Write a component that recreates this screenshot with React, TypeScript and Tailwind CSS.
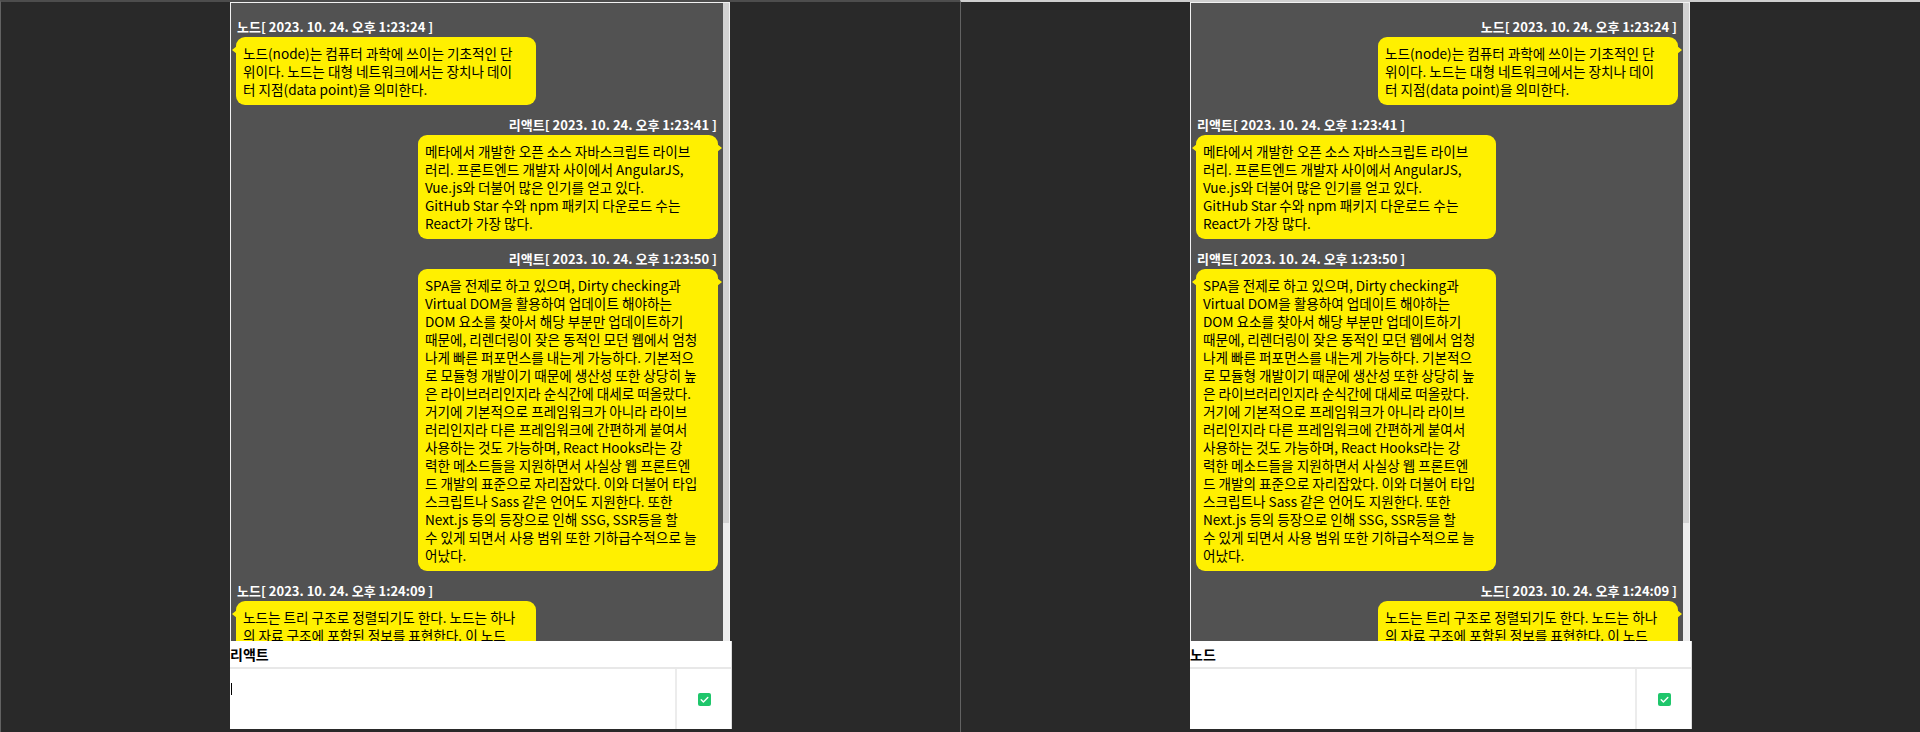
type Message = {
  sender: string;
  time: string;
  lines: string[];
};

const messages: Message[] = [
  {
    sender: '노드',
    time: '2023. 10. 24. 오후 1:23:24',
    lines: [
      '노드(node)는 컴퓨터 과학에 쓰이는 기초적인 단',
      '위이다. 노드는 대형 네트워크에서는 장치나 데이',
      '터 지점(data point)을 의미한다.',
    ],
  },
  {
    sender: '리액트',
    time: '2023. 10. 24. 오후 1:23:41',
    lines: [
      '메타에서 개발한 오픈 소스 자바스크립트 라이브',
      '러리. 프론트엔드 개발자 사이에서 AngularJS,',
      'Vue.js와 더불어 많은 인기를 얻고 있다.',
      'GitHub Star 수와 npm 패키지 다운로드 수는',
      'React가 가장 많다.',
    ],
  },
  {
    sender: '리액트',
    time: '2023. 10. 24. 오후 1:23:50',
    lines: [
      'SPA을 전제로 하고 있으며, Dirty checking과',
      'Virtual DOM을 활용하여 업데이트 해야하는',
      'DOM 요소를 찾아서 해당 부분만 업데이트하기',
      '때문에, 리렌더링이 잦은 동적인 모던 웹에서 엄청',
      '나게 빠른 퍼포먼스를 내는게 가능하다. 기본적으',
      '로 모듈형 개발이기 때문에 생산성 또한 상당히 높',
      '은 라이브러리인지라 순식간에 대세로 떠올랐다.',
      '거기에 기본적으로 프레임워크가 아니라 라이브',
      '러리인지라 다른 프레임워크에 간편하게 붙여서',
      '사용하는 것도 가능하며, React Hooks라는 강',
      '력한 메소드들을 지원하면서 사실상 웹 프론트엔',
      '드 개발의 표준으로 자리잡았다. 이와 더불어 타입',
      '스크립트나 Sass 같은 언어도 지원한다. 또한',
      'Next.js 등의 등장으로 인해 SSG, SSR등을 할',
      '수 있게 되면서 사용 범위 또한 기하급수적으로 늘',
      '어났다.',
    ],
  },
  {
    sender: '노드',
    time: '2023. 10. 24. 오후 1:24:09',
    lines: [
      '노드는 트리 구조로 정렬되기도 한다. 노드는 하나',
      '의 자료 구조에 포함된 정보를 표현한다. 이 노드',
      '는 값(value)을 가지며, 다른 노드와 연결된다.',
    ],
  },
];

const CheckIcon = () => (
  <svg width="13" height="13" viewBox="0 0 13 13">
    <rect width="13" height="13" rx="2" fill="#1fc66b" />
    <path
      d="M3.2 6.8 L5.4 8.9 L9.8 4.4"
      fill="none"
      stroke="#fff"
      strokeWidth="1.4"
      strokeLinecap="round"
      strokeLinejoin="round"
    />
  </svg>
);

const Bubble = ({ message, mine }: { message: Message; mine: boolean }) => {
  return (
    <div className={`mb-[10px] flex flex-col ${mine ? 'items-end' : 'items-start'}`}>
      <div className="h-[20px] px-[1px] text-[13px] leading-[20px] font-bold text-white">
        {message.sender}[ {message.time} ]
      </div>
      <div className="relative w-[300px] rounded-[9px] bg-[#fff000] px-[7px] py-[7px] text-[13.6px] leading-[18px] text-black">
        {mine ? (
          <span className="absolute top-[9px] -right-[4px] h-0 w-0 border-y-[4px] border-l-[5px] border-y-transparent border-l-[#fff000]" />
        ) : (
          <span className="absolute top-[9px] -left-[4px] h-0 w-0 border-y-[4px] border-r-[5px] border-y-transparent border-r-[#fff000]" />
        )}
        {message.lines.map((line, i) => (
          <div key={i} className="whitespace-nowrap">
            {line}
          </div>
        ))}
      </div>
    </div>
  );
};

const ChatPanel = ({ me, focused, topColor }: { me: string; focused: boolean; topColor: string }) => {
  return (
    <div className={`h-full w-[960px] border-t-2 border-l border-l-[#626262] pl-[229px] ${topColor}`}>
      <div className="flex h-[639px] w-[500px] border-x border-t border-[#f2f2f2]">
        <div className="flex-1 overflow-hidden bg-[#525252] px-[5px] pt-[14px]">
          {messages.map((m, i) => (
            <Bubble key={i} message={m} mine={m.sender === me} />
          ))}
        </div>
        <div className="flex w-[6px] flex-col bg-[#ededed]">
          <div className="h-[520px] bg-[#d2d2d2]" />
        </div>
      </div>
      <div className="w-[502px] border-r border-[#dcdcdc] bg-white">
        <div className="flex h-[26px] items-center text-[14px] font-bold text-black">{me}</div>
        <div className="h-[2px] bg-[#e8e8e8]" />
        <div className="flex h-[60px]">
          <div className="flex-1 border-r-2 border-[#ececec] pt-[14px]">
            {focused && <div className="ml-[1px] h-[12px] w-[1px] bg-black" />}
          </div>
          <div className="flex w-[54px] items-center justify-center">
            <CheckIcon />
          </div>
        </div>
      </div>
    </div>
  );
};

export default function App() {
  return (
    <div className="flex h-[732px] w-[1920px] bg-[#292929] font-['Noto_Sans_CJK_KR',sans-serif]">
      <ChatPanel me="리액트" focused topColor="border-t-[#4d4d4d]" />
      <ChatPanel me="노드" focused={false} topColor="border-t-[#cfcfcf]" />
    </div>
  );
}
